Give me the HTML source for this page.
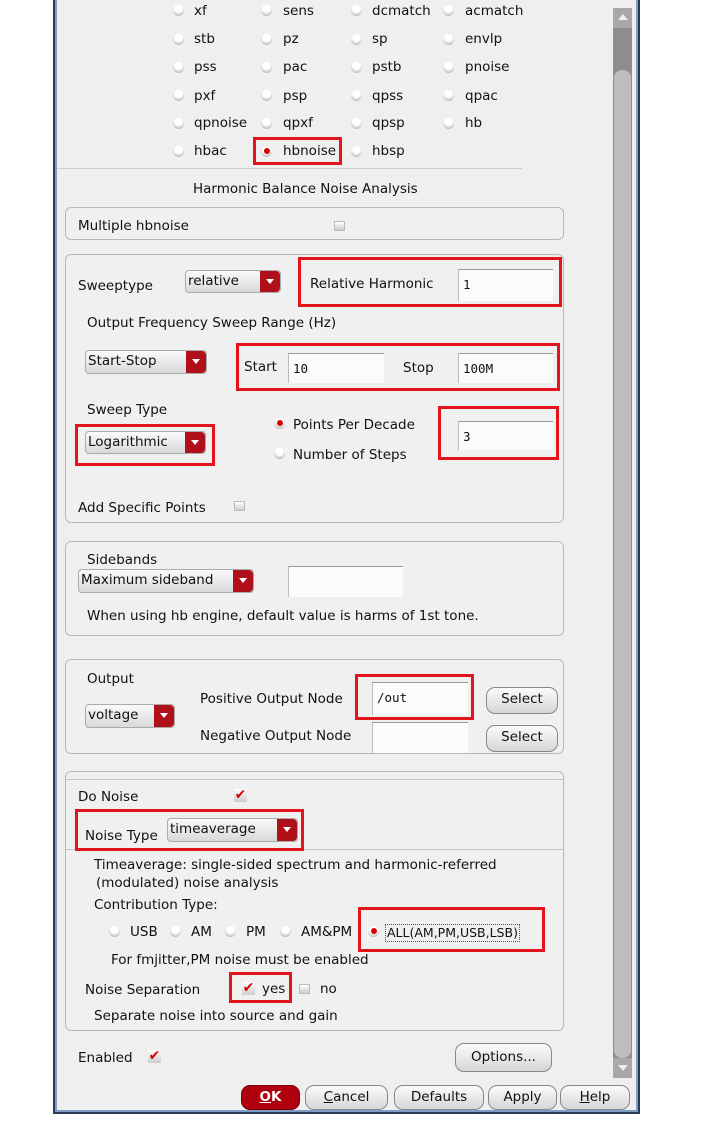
<!DOCTYPE html>
<html><head><meta charset="utf-8"><style>
*{box-sizing:border-box;margin:0;padding:0}
body{width:725px;height:1122px;background:#fff;position:relative;overflow:hidden;font-family:"DejaVu Sans","Liberation Sans",sans-serif;font-size:13.5px;color:#111}
.a{position:absolute}
.t{position:absolute;line-height:16px;white-space:nowrap}
.win{left:53px;top:-4px;width:587px;height:1118px;border:2px solid #2a3a55;outline:2px solid #7d9cc4;outline-offset:-4px;background:#efefef}
.box{position:absolute;border:1px solid #b8b8b8;border-radius:6px;background:#f0f0f0}
.rb{position:absolute;border:3px solid #e3141e}
.in{position:absolute;background:#fbfbfb;border-top:1px solid #999;border-left:1px solid #bbb;font-family:"DejaVu Sans Mono","Liberation Mono",monospace;font-size:12.5px;padding:7px 0 0 4px}
.dd{position:absolute;border-radius:4px;background:linear-gradient(#fafafa,#d9d9d9);border:1px solid #aaa;padding-left:2px;line-height:20px;overflow:hidden}
.dd:after{content:"";position:absolute;right:0;top:0;bottom:0;width:20px;background:#b0101a;border-radius:0 4px 4px 0}
.dd i{position:absolute;right:6px;top:8px;width:0;height:0;border-left:4px solid transparent;border-right:4px solid transparent;border-top:5px solid #fff;z-index:2}
.r{position:absolute;width:11px;height:11px;border-radius:50%;background:radial-gradient(circle at 50% 30%,#fff 40%,#bbb 80%)}
.r.on:after{content:"";position:absolute;left:3px;top:2px;width:6px;height:6px;border-radius:50%;background:#d00}
.cb{position:absolute;width:11px;height:10px;background:linear-gradient(#fff,#ccc);border:1px solid #bbb}
.ck{position:absolute;color:#d00;font-size:14px;font-weight:bold;line-height:12px;width:13px;height:13px;background:linear-gradient(#fff,#ccc);text-align:center}
.btn{position:absolute;border:1px solid #888;border-radius:9px;background:linear-gradient(#fbfbfb,#d6d6d6);text-align:center;line-height:22px}
</style></head><body>
<div class="a win"></div>
<div class="a" style="left:613px;top:8px;width:19px;height:20px;background:#a8a8a8"></div>
<div class="a" style="left:618px;top:14px;border-left:5px solid transparent;border-right:5px solid transparent;border-bottom:6px solid #eee"></div>
<div class="a" style="left:613px;top:28px;width:19px;height:1050px;background:#8e8e8e"></div>
<div class="a" style="left:614px;top:70px;width:17px;height:988px;background:#bdbdbd;border-radius:8px"></div>
<div class="a" style="left:613px;top:1058px;width:19px;height:20px;background:#a8a8a8"></div>
<div class="a" style="left:618px;top:1065px;border-left:5px solid transparent;border-right:5px solid transparent;border-top:6px solid #eee"></div>

<div class="r" style="left:173px;top:5px"></div><div class="t" style="left:194px;top:3px">xf</div>
<div class="r" style="left:261px;top:5px"></div><div class="t" style="left:283px;top:3px">sens</div>
<div class="r" style="left:351px;top:5px"></div><div class="t" style="left:372px;top:3px">dcmatch</div>
<div class="r" style="left:443px;top:5px"></div><div class="t" style="left:465px;top:3px">acmatch</div>
<div class="r" style="left:173px;top:34px"></div><div class="t" style="left:194px;top:31px">stb</div>
<div class="r" style="left:261px;top:34px"></div><div class="t" style="left:283px;top:31px">pz</div>
<div class="r" style="left:351px;top:34px"></div><div class="t" style="left:372px;top:31px">sp</div>
<div class="r" style="left:443px;top:34px"></div><div class="t" style="left:465px;top:31px">envlp</div>
<div class="r" style="left:173px;top:62px"></div><div class="t" style="left:194px;top:59px">pss</div>
<div class="r" style="left:261px;top:62px"></div><div class="t" style="left:283px;top:59px">pac</div>
<div class="r" style="left:351px;top:62px"></div><div class="t" style="left:372px;top:59px">pstb</div>
<div class="r" style="left:443px;top:62px"></div><div class="t" style="left:465px;top:59px">pnoise</div>
<div class="r" style="left:173px;top:90px"></div><div class="t" style="left:194px;top:88px">pxf</div>
<div class="r" style="left:261px;top:90px"></div><div class="t" style="left:283px;top:88px">psp</div>
<div class="r" style="left:351px;top:90px"></div><div class="t" style="left:372px;top:88px">qpss</div>
<div class="r" style="left:443px;top:90px"></div><div class="t" style="left:465px;top:88px">qpac</div>
<div class="r" style="left:173px;top:118px"></div><div class="t" style="left:194px;top:115px">qpnoise</div>
<div class="r" style="left:261px;top:118px"></div><div class="t" style="left:283px;top:115px">qpxf</div>
<div class="r" style="left:351px;top:118px"></div><div class="t" style="left:372px;top:115px">qpsp</div>
<div class="r" style="left:443px;top:118px"></div><div class="t" style="left:465px;top:115px">hb</div>
<div class="r" style="left:173px;top:146px"></div><div class="t" style="left:194px;top:143px">hbac</div>
<div class="r on" style="left:261px;top:146px"></div><div class="t" style="left:283px;top:143px">hbnoise</div>
<div class="r" style="left:351px;top:146px"></div><div class="t" style="left:372px;top:143px">hbsp</div>
<div class="rb" style="left:253px;top:137px;width:89px;height:28px"></div>
<div class="a" style="left:57px;top:168px;width:465px;height:1px;background:#ccc"></div>
<div class="t" style="left:193px;top:181px">Harmonic Balance Noise Analysis</div>

<div class="box" style="left:65px;top:207px;width:499px;height:33px"></div>
<div class="t" style="left:78px;top:218px">Multiple hbnoise</div>
<div class="cb" style="left:334px;top:221px"></div>

<div class="box" style="left:65px;top:254px;width:499px;height:269px"></div>
<div class="t" style="left:78px;top:278px">Sweeptype</div>
<div class="dd" style="left:185px;top:270px;width:96px;height:23px">relative<i></i></div>
<div class="rb" style="left:298px;top:257px;width:264px;height:50px"></div>
<div class="t" style="left:310px;top:276px">Relative Harmonic</div>
<div class="in" style="left:458px;top:269px;width:95px;height:32px">1</div>
<div class="t" style="left:87px;top:315px">Output Frequency Sweep Range (Hz)</div>
<div class="dd" style="left:85px;top:350px;width:122px;height:24px">Start-Stop<i></i></div>
<div class="rb" style="left:236px;top:343px;width:324px;height:48px"></div>
<div class="t" style="left:244px;top:359px">Start</div>
<div class="in" style="left:288px;top:353px;width:96px;height:30px">10</div>
<div class="t" style="left:403px;top:360px">Stop</div>
<div class="in" style="left:458px;top:353px;width:95px;height:30px">100M</div>
<div class="t" style="left:87px;top:402px">Sweep Type</div>
<div class="rb" style="left:75px;top:424px;width:140px;height:42px"></div>
<div class="dd" style="left:85px;top:431px;width:121px;height:23px">Logarithmic<i></i></div>
<div class="r on" style="left:274px;top:418px"></div><div class="t" style="left:293px;top:417px">Points Per Decade</div>
<div class="r" style="left:274px;top:448px"></div><div class="t" style="left:293px;top:447px">Number of Steps</div>
<div class="rb" style="left:438px;top:406px;width:121px;height:54px"></div>
<div class="in" style="left:458px;top:421px;width:95px;height:29px">3</div>
<div class="t" style="left:78px;top:500px">Add Specific Points</div>
<div class="cb" style="left:234px;top:501px"></div>

<div class="box" style="left:65px;top:541px;width:499px;height:95px"></div>
<div class="t" style="left:87px;top:552px">Sidebands</div>
<div class="dd" style="left:78px;top:569px;width:176px;height:24px">Maximum sideband<i></i></div>
<div class="in" style="left:288px;top:566px;width:115px;height:31px"></div>
<div class="t" style="left:87px;top:608px">When using hb engine, default value is harms of 1st tone.</div>

<div class="box" style="left:65px;top:659px;width:499px;height:95px"></div>
<div class="t" style="left:87px;top:671px">Output</div>
<div class="dd" style="left:85px;top:704px;width:90px;height:24px">voltage<i></i></div>
<div class="t" style="left:200px;top:691px">Positive Output Node</div>
<div class="rb" style="left:355px;top:674px;width:119px;height:46px"></div>
<div class="in" style="left:372px;top:682px;width:96px;height:33px">/out</div>
<div class="btn" style="left:486px;top:687px;width:72px;height:27px">Select</div>
<div class="t" style="left:200px;top:728px">Negative Output Node</div>
<div class="in" style="left:372px;top:722px;width:96px;height:31px"></div>
<div class="btn" style="left:486px;top:725px;width:72px;height:27px">Select</div>

<div class="box" style="left:65px;top:771px;width:499px;height:260px"></div>
<div class="a" style="left:66px;top:779px;width:497px;height:1px;background:#c4c4c4"></div>
<div class="a" style="left:66px;top:849px;width:497px;height:1px;background:#c4c4c4"></div>
<div class="t" style="left:78px;top:789px">Do Noise</div>
<div class="ck" style="left:234px;top:789px">✔</div>
<div class="rb" style="left:75px;top:809px;width:229px;height:42px"></div>
<div class="t" style="left:85px;top:828px">Noise Type</div>
<div class="dd" style="left:167px;top:818px;width:131px;height:24px">timeaverage<i></i></div>
<div class="t" style="left:94px;top:857px">Timeaverage: single-sided spectrum and harmonic-referred</div>
<div class="t" style="left:96px;top:875px">(modulated) noise analysis</div>
<div class="t" style="left:94px;top:897px">Contribution Type:</div>
<div class="r" style="left:109px;top:926px"></div><div class="t" style="left:130px;top:924px">USB</div>
<div class="r" style="left:170px;top:926px"></div><div class="t" style="left:191px;top:924px">AM</div>
<div class="r" style="left:225px;top:926px"></div><div class="t" style="left:246px;top:924px">PM</div>
<div class="r" style="left:280px;top:926px"></div><div class="t" style="left:301px;top:924px">AM&amp;PM</div>
<div class="r on" style="left:368px;top:926px"></div><div class="t" style="left:385px;top:924px;border:1px dotted #555;padding:0 1px;font-size:12.5px">ALL(AM,PM,USB,LSB)</div>
<div class="rb" style="left:358px;top:907px;width:187px;height:45px"></div>
<div class="t" style="left:111px;top:952px">For fmjitter,PM noise must be enabled</div>
<div class="t" style="left:85px;top:982px">Noise Separation</div>
<div class="rb" style="left:229px;top:972px;width:63px;height:31px"></div>
<div class="ck" style="left:242px;top:982px">✔</div><div class="t" style="left:262px;top:981px">yes</div>
<div class="cb" style="left:299px;top:984px"></div><div class="t" style="left:320px;top:981px">no</div>
<div class="t" style="left:94px;top:1008px">Separate noise into source and gain</div>

<div class="t" style="left:78px;top:1050px">Enabled</div>
<div class="ck" style="left:148px;top:1050px">✔</div>
<div class="btn" style="left:455px;top:1043px;width:97px;height:29px;line-height:27px">Options...</div>

<div class="btn" style="left:241px;top:1085px;width:59px;height:25px;background:#b00010;color:#fff;font-weight:bold;border-color:#700"><u>O</u>K</div>
<div class="btn" style="left:305px;top:1085px;width:83px;height:25px"><u>C</u>ancel</div>
<div class="btn" style="left:394px;top:1085px;width:90px;height:25px">Defaults</div>
<div class="btn" style="left:488px;top:1085px;width:69px;height:25px">Apply</div>
<div class="btn" style="left:560px;top:1085px;width:70px;height:25px"><u>H</u>elp</div>
</body></html>
